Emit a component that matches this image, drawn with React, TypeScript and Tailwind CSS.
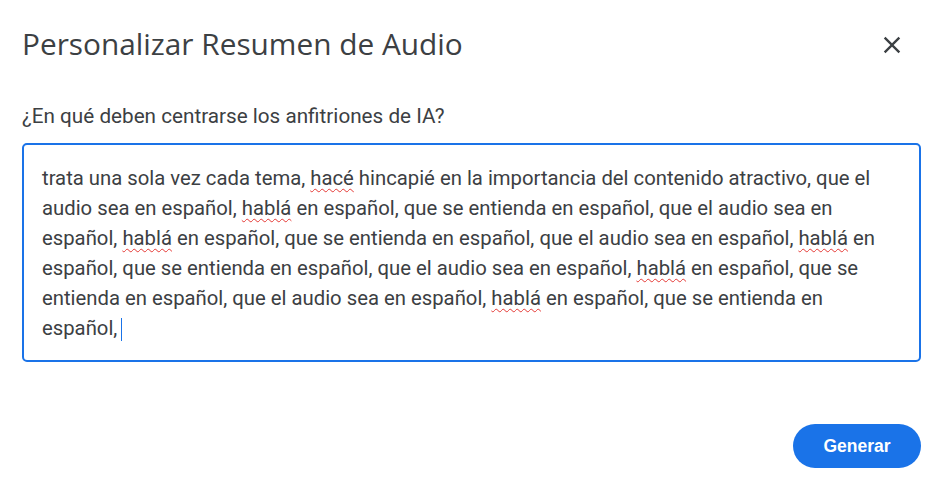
import React from "react";

const W = ({ children }: { children: React.ReactNode }) => (
  <span className="underline decoration-wavy decoration-[#e53935] decoration-1 underline-offset-[3px]">{children}</span>
);

export default function App() {
  return (
    <div className="w-[941px] h-[487px] bg-white flex flex-col pl-[22px] pr-[20px] pt-[24px] pb-[19px]" style={{ fontFamily: "Roboto, 'Liberation Sans', sans-serif" }}>
      <div className="flex items-start justify-between h-[40px]">
        <h1 className="text-[29.8px] leading-[40px] text-[#3c4043]" style={{ fontFamily: "'Open Sans', Roboto, sans-serif" }}>
          Personalizar Resumen de Audio
        </h1>
        <button className="w-[40px] h-[40px] mt-[1px] flex items-center justify-center mr-[9px] text-[#3c4043]">
          <svg width="28" height="28" viewBox="0 0 24 24" fill="currentColor">
            <path d="M19 6.41 17.59 5 12 10.59 6.41 5 5 6.41 10.59 12 5 17.59 6.41 19 12 13.41 17.59 19 19 17.59 13.41 12z" />
          </svg>
        </button>
      </div>
      <div className="mt-[40px] text-[20.7px] text-[#3c4043] leading-[24px]">¿En qué deben centrarse los anfitriones de IA?</div>
      <div className="mt-[15px] h-[219px] border-2 border-[#1a73e8] rounded-[5px] pl-[18px] pr-[20px] pt-[18px] text-[20.3px] leading-[30px] text-[#3c4043]">
        trata una sola vez cada tema, <W>hacé</W> hincapié en la importancia del contenido atractivo, que el audio sea en español, <W>hablá</W> en español, que se entienda en español, que el audio sea en español, <W>hablá</W> en español, que se entienda en español, que el audio sea en español, <W>hablá</W> en español, que se entienda en español, que el audio sea en español, <W>hablá</W> en español, que se entienda en español, que el audio sea en español, <W>hablá</W> en español, que se entienda en español,
        <span className="inline-block w-[1px] h-[23px] bg-[#1a73e8] align-middle ml-[4px]" />
      </div>
      <div className="flex-1" />
      <div className="flex justify-end">
        <button className="w-[128px] h-[44px] rounded-full bg-[#1a73e8] text-white text-[17.5px] font-bold" style={{ fontFamily: "'Liberation Sans', Arial, sans-serif" }}>
          Generar
        </button>
      </div>
    </div>
  );
}
